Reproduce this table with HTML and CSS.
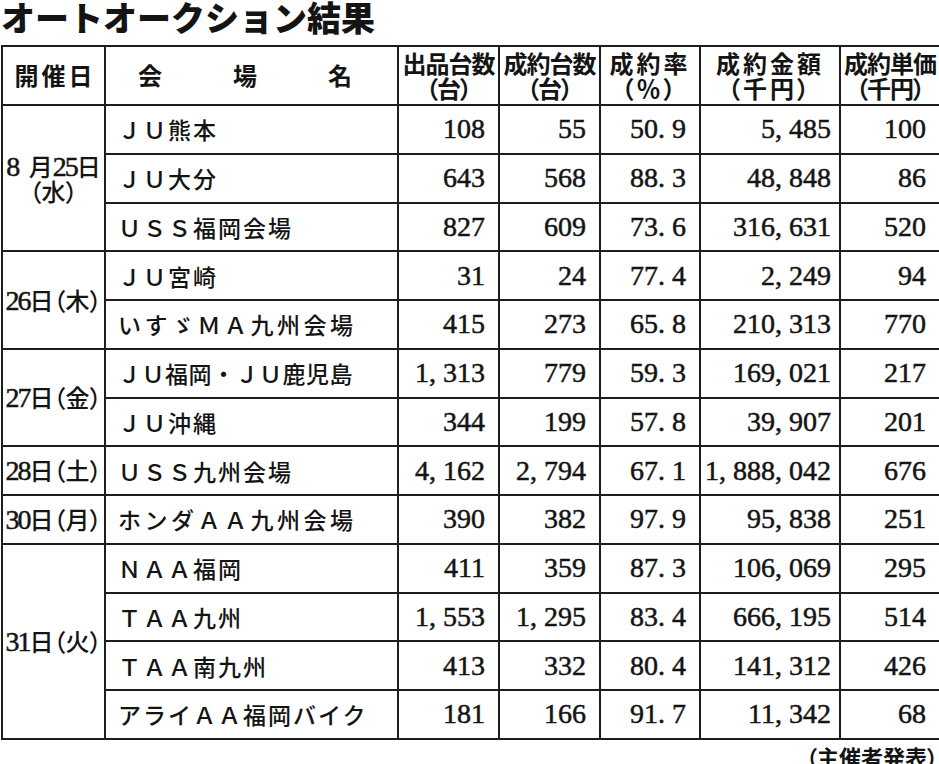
FILE: index.html
```html
<!DOCTYPE html>
<html lang="ja">
<head>
<meta charset="utf-8">
<title>オートオークション結果</title>
<link rel="stylesheet" href="styles.css">
</head>
<body>
<div class="page">
  <h1 class="title">オートオークション結果</h1>
  <table class="results">
    <colgroup>
      <col class="c-date"><col class="c-name"><col class="c-n1"><col class="c-n2"><col class="c-n3"><col class="c-n4"><col class="c-n5">
    </colgroup>
    <thead>
      <tr>
        <th class="h-date">開催日</th>
        <th class="h-name"><div class="spread"><span>会</span><span>場</span><span>名</span></div></th>
        <th class="h-tight">出品台数<br>（台）</th>
        <th class="h-tight">成約台数<br>（台）</th>
        <th class="h-wide">成約率<br>（％）</th>
        <th class="h-wide">成約金額<br>（千円）</th>
        <th class="h-tight">成約単価<br>（千円）</th>
      </tr>
    </thead>
    <tbody>
      <tr>
        <td class="date" rowspan="3"><span class="dn dn-pad">8</span> 月<span class="dn">25</span>日<br>（水）</td>
        <td class="name">ＪＵ熊本</td>
        <td class="num">108</td><td class="num">55</td><td class="num">50. 9</td><td class="num amt">5, 485</td><td class="num">100</td>
      </tr>
      <tr>
        <td class="name">ＪＵ大分</td>
        <td class="num">643</td><td class="num">568</td><td class="num">88. 3</td><td class="num amt">48, 848</td><td class="num">86</td>
      </tr>
      <tr>
        <td class="name">ＵＳＳ福岡会場</td>
        <td class="num">827</td><td class="num">609</td><td class="num">73. 6</td><td class="num amt">316, 631</td><td class="num">520</td>
      </tr>
      <tr>
        <td class="date" rowspan="2"><span class="dn">26</span>日（木）</td>
        <td class="name">ＪＵ宮崎</td>
        <td class="num">31</td><td class="num">24</td><td class="num">77. 4</td><td class="num amt">2, 249</td><td class="num">94</td>
      </tr>
      <tr>
        <td class="name name-wide">いすゞＭＡ九州会場</td>
        <td class="num">415</td><td class="num">273</td><td class="num">65. 8</td><td class="num amt">210, 313</td><td class="num">770</td>
      </tr>
      <tr>
        <td class="date" rowspan="2"><span class="dn">27</span>日（金）</td>
        <td class="name name-tight">ＪＵ福岡・ＪＵ鹿児島</td>
        <td class="num">1, 313</td><td class="num">779</td><td class="num">59. 3</td><td class="num amt">169, 021</td><td class="num">217</td>
      </tr>
      <tr>
        <td class="name">ＪＵ沖縄</td>
        <td class="num">344</td><td class="num">199</td><td class="num">57. 8</td><td class="num amt">39, 907</td><td class="num">201</td>
      </tr>
      <tr>
        <td class="date"><span class="dn">28</span>日（土）</td>
        <td class="name">ＵＳＳ九州会場</td>
        <td class="num">4, 162</td><td class="num">2, 794</td><td class="num">67. 1</td><td class="num amt">1, 888, 042</td><td class="num">676</td>
      </tr>
      <tr>
        <td class="date"><span class="dn">30</span>日（月）</td>
        <td class="name name-wide">ホンダＡＡ九州会場</td>
        <td class="num">390</td><td class="num">382</td><td class="num">97. 9</td><td class="num amt">95, 838</td><td class="num">251</td>
      </tr>
      <tr>
        <td class="date" rowspan="4"><span class="dn">31</span>日（火）</td>
        <td class="name">ＮＡＡ福岡</td>
        <td class="num">411</td><td class="num">359</td><td class="num">87. 3</td><td class="num amt">106, 069</td><td class="num">295</td>
      </tr>
      <tr>
        <td class="name">ＴＡＡ九州</td>
        <td class="num">1, 553</td><td class="num">1, 295</td><td class="num">83. 4</td><td class="num amt">666, 195</td><td class="num">514</td>
      </tr>
      <tr>
        <td class="name">ＴＡＡ南九州</td>
        <td class="num">413</td><td class="num">332</td><td class="num">80. 4</td><td class="num amt">141, 312</td><td class="num">426</td>
      </tr>
      <tr>
        <td class="name">アライＡＡ福岡バイク</td>
        <td class="num">181</td><td class="num">166</td><td class="num">91. 7</td><td class="num amt">11, 342</td><td class="num">68</td>
      </tr>
    </tbody>
  </table>
  <p class="source">（主催者発表）</p>
</div>
</body>
</html>
```

FILE: styles.css
```css
* { box-sizing: border-box; }
html, body { margin: 0; padding: 0; background: #fff; }
body {
  width: 939px;
  height: 764px;
  overflow: hidden;
  color: #141414;
  font-family: "Noto Sans CJK JP", "Noto Sans CJK SC", sans-serif;
}
.page { display: flex; flex-direction: column; }

.title {
  margin: 0 0 11px;
  padding-left: 1px;
  font-size: 34px;
  line-height: 34px;
  font-weight: 900;
  white-space: nowrap;
}

.results {
  border-collapse: collapse;
  table-layout: fixed;
  width: 938px;
  margin-left: 1px;
}
.c-date { width: 103px; }
.c-name { width: 293px; }
.c-n1 { width: 101px; }
.c-n2 { width: 101px; }
.c-n3 { width: 100px; }
.c-n4 { width: 140px; }
.c-n5 { width: 100px; }

th, td { padding: 0; }
.results th,
.results td {
  border: 2px solid #1e1e1e;
  vertical-align: middle;
}
.results thead tr { height: 59px; }
.results tbody tr { height: 48.75px; }

.results th {
  font-size: 24px;
  line-height: 25px;
  font-weight: 700;
  text-align: center;
  font-feature-settings: "palt";
  white-space: nowrap;
  padding-bottom: 2px;
}
.h-date { letter-spacing: 3px; padding-left: 3px; }
.h-tight { letter-spacing: -1px; }
.h-wide { letter-spacing: 3px; }
.spread {
  display: flex;
  justify-content: space-between;
  padding: 0 45px 0 32px;
}

.date {
  text-align: center;
  font-size: 24px;
  line-height: 24px;
  font-weight: 500;
  font-feature-settings: "palt";
  white-space: nowrap;
}
.dn {
  font-family: "Liberation Serif", serif;
  font-size: 28px;
  line-height: 24px;
  font-weight: 400;
  letter-spacing: -2px;
  -webkit-text-stroke: 0.5px currentColor;
}
.dn-pad { margin-right: 5px; }

.name {
  padding-left: 12px;
  font-size: 23px;
  font-weight: 500;
  letter-spacing: 2px;
  white-space: nowrap;
}
.name-tight { letter-spacing: 0.5px; }
.name-wide { letter-spacing: 3.5px; }

.num {
  text-align: right;
  padding-right: 13px;
  font-family: "Liberation Serif", serif;
  font-size: 28px;
  line-height: 28px;
  white-space: nowrap;
  -webkit-text-stroke: 0.5px currentColor;
}
.amt { padding-right: 8px; }

.source {
  margin: 5px 0 0;
  padding-right: 1px;
  text-align: right;
  font-size: 22px;
  line-height: 22px;
  font-weight: 700;
  font-feature-settings: "palt";
}
```
